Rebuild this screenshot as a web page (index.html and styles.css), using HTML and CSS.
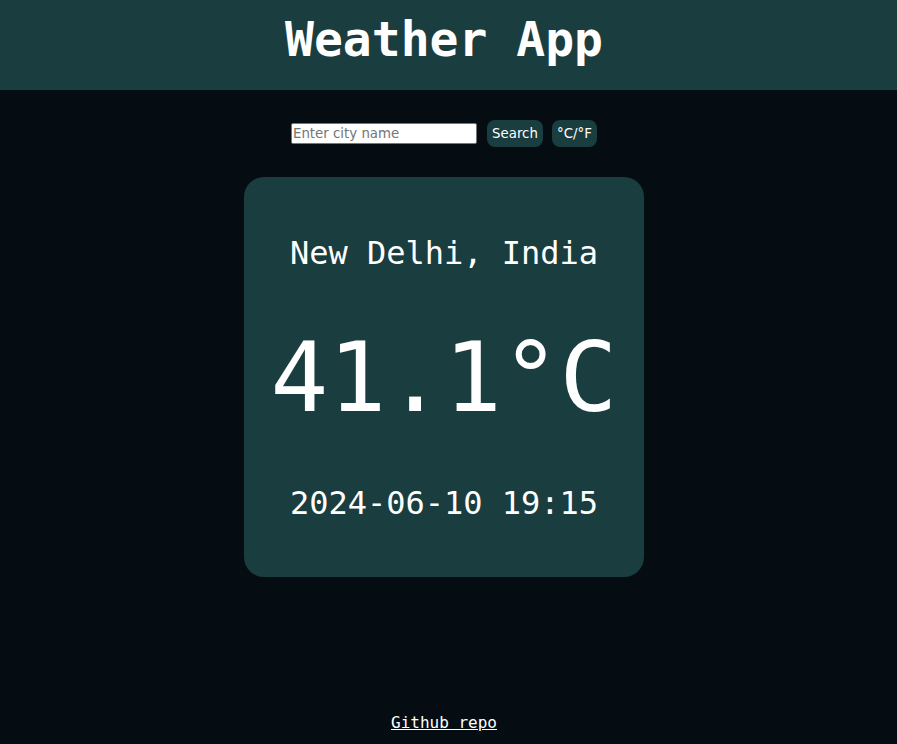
FILE: index.html
```html
<!DOCTYPE html>
<html lang="en">
<head>
<meta charset="utf-8">
<title>Weather App</title>
<link rel="stylesheet" href="styles.css">
</head>
<body>
<div class="page">
  <header class="header">
    <h1 class="title">Weather App</h1>
  </header>
  <main class="main">
    <div class="controls">
      <input class="city-input" type="text" placeholder="Enter city name">
      <button class="btn btn-search">Search</button>
      <button class="btn btn-unit">°C/°F</button>
    </div>
    <section class="card">
      <h2 class="city">New Delhi, India</h2>
      <div class="temp">41.1°C</div>
      <div class="time">2024-06-10 19:15</div>
    </section>
  </main>
  <footer class="footer">
    <a class="repo-link" href="#">Github repo</a>
  </footer>
</div>
</body>
</html>
```
FILE: styles.css
```css
html, body {
  margin: 0;
  padding: 0;
}
body {
  background: #050d13;
  color: #ffffff;
  font-family: "DejaVu Sans Mono", monospace;
}
.page {
  min-height: 100vh;
  display: flex;
  flex-direction: column;
}
.header {
  background: #1a3d3f;
  height: 90px;
  display: flex;
  align-items: center;
  justify-content: center;
  padding-right: 9px;
}
.title {
  margin: 0;
  font-size: 48px;
  font-weight: bold;
  line-height: 1;
  transform: translateY(-6px);
}
.main {
  display: flex;
  flex-direction: column;
  align-items: center;
  padding-right: 9px;
}
.controls {
  margin-top: 30px;
  display: flex;
  align-items: center;
}
.city-input {
  width: 186px;
  height: 21px;
  box-sizing: border-box;
  font-family: "DejaVu Sans", sans-serif;
  font-size: 13.33px;
  padding: 1px 1px;
  border: 1px solid #767676;
  border-radius: 2px;
  background: #ffffff;
  color: #000;
}
.city-input::placeholder {
  color: #757575;
}
.btn {
  background: #1a3d3f;
  color: #ffffff;
  border: none;
  border-radius: 8px;
  height: 27px;
  font-family: "DejaVu Sans", sans-serif;
  font-size: 13.33px;
  padding: 0 5px;
}
.btn-search {
  margin-left: 10px;
  width: 56px;
}
.btn-unit {
  margin-left: 9px;
  width: 45px;
}
.card {
  margin-top: 30px;
  width: 400px;
  height: 400px;
  box-sizing: border-box;
  background: #1a3d3f;
  border-radius: 20px;
  display: flex;
  flex-direction: column;
  align-items: center;
  padding-top: 57px;
}
.city {
  margin: 0;
  font-size: 32px;
  font-weight: normal;
  line-height: normal;
}
.temp {
  margin-top: 50px;
  font-size: 96px;
  line-height: normal;
}
.time {
  margin-top: 50px;
  font-size: 32px;
  line-height: normal;
}
.footer {
  margin-top: auto;
  display: flex;
  justify-content: center;
  padding-bottom: 12px;
  padding-right: 9px;
}
.repo-link {
  color: #ffffff;
  font-size: 16px;
}
```
